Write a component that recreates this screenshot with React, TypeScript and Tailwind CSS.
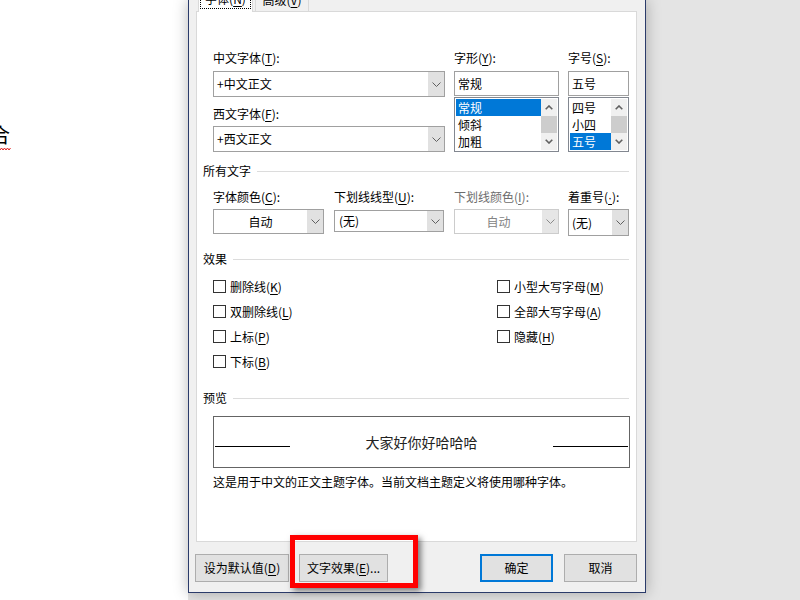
import React from "react";

const Chev = ({ color = "#606060" }: { color?: string }) => (
  <svg width="9" height="5" viewBox="0 0 9 5">
    <polyline points="0.5,0.5 4.5,4.5 8.5,0.5" fill="none" stroke={color} strokeWidth="1" />
  </svg>
);

const ScrollUp = () => (
  <svg width="8" height="5" viewBox="0 0 8 5">
    <polyline points="0.7,4.3 4,1 7.3,4.3" fill="none" stroke="#606060" strokeWidth="1.6" />
  </svg>
);
const ScrollDown = () => (
  <svg width="8" height="5" viewBox="0 0 8 5">
    <polyline points="0.7,0.7 4,4 7.3,0.7" fill="none" stroke="#606060" strokeWidth="1.6" />
  </svg>
);

const U = ({ children }: { children: React.ReactNode }) => <span className="underline underline-offset-2">{children}</span>;

const Scrollbar = () => (
  <div className="w-[16px] flex flex-col bg-[#f0f0f0]">
    <div className="h-[17px] flex items-center justify-center"><ScrollUp /></div>
    <div className="h-[17px] bg-[#cdcdcd]"></div>
    <div className="h-[17px] flex items-center justify-center"><ScrollDown /></div>
  </div>
);

const Check = ({ children }: { children: React.ReactNode }) => (
  <div className="h-[25px] flex items-center">
    <div className="w-[13px] h-[13px] border border-[#333333] bg-white"></div>
    <div className="ml-[4px] leading-[16px]">{children}</div>
  </div>
);

const Section = ({ title, className }: { title: string; className: string }) => (
  <div className={"flex items-center h-[16px] mr-[7px] " + className}>
    <span className="leading-[16px]">{title}</span>
    <div className="flex-1 h-px bg-[#dcdcdc] ml-[6px]"></div>
  </div>
);

export default function App() {
  return (
    <div className="w-[800px] h-[600px] flex overflow-hidden bg-[#e4e4e4] text-[12px] text-black font-['Microsoft_YaHei','Noto_Sans_CJK_SC','Noto_Sans',sans-serif]">
      {/* document page */}
      <div className="w-[188px] h-full bg-white shrink-0">
        <div className="mt-[122px] -ml-[10px] flex flex-col items-start">
          <span className="text-[20px] leading-[26px] font-['Noto_Sans_CJK_SC',serif]">合</span>
          <svg width="22" height="4" viewBox="0 0 22 4" className="-mt-[1px]">
            <polyline points="10,3 11.5,1 13,3 14.5,1 16,3 17.5,1 19,3 20.5,1" fill="none" stroke="#e02020" strokeWidth="1" />
          </svg>
        </div>
      </div>

      {/* dialog */}
      <div className="relative z-10 w-[458px] h-[593px] shrink-0 bg-[#f0f0f0] border-x border-b border-[#2b3b6a] shadow-[0_0_14px_rgba(0,0,0,0.28)] flex flex-col">
        {/* tabs */}
        <div className="relative z-10 h-[12px] overflow-hidden flex items-end pl-[9px]">
          <div className="w-[55px] h-[24px] bg-white border-x border-[#d9d9d9] flex flex-col items-stretch">
            <div className="mx-[1px] h-[21px] border border-dotted border-black flex items-center justify-center leading-[16px]">
              字体(<U>N</U>)
            </div>
          </div>
          <div className="ml-[2px] w-[54px] h-[23px] mb-[1px] bg-[#f0f0f0] border-x border-t border-[#d9d9d9] flex items-center justify-center leading-[16px]">
            高级(<U>V</U>)
          </div>
        </div>

        {/* panel */}
        <div className="-mt-px ml-[7px] mr-[8px] h-[531px] border border-[#d9d9d9] bg-white pl-[6px] pt-[38px] flex flex-col">
          {/* fonts row */}
          <div className="pl-[10px] flex items-start">
            <div className="w-[232px] flex flex-col">
              <div className="h-[16px] leading-[16px]">中文字体(<U>T</U>):</div>
              <div className="mt-[5px] h-[26px] flex border border-[#a0a0a0] bg-white">
                <div className="flex-1 pl-[3px] leading-[24px]">+中文正文</div>
                <div className="w-[16px] bg-[#e1e1e1] flex items-center justify-center"><Chev /></div>
              </div>
              <div className="mt-[9px] h-[16px] leading-[16px]">西文字体(<U>F</U>):</div>
              <div className="mt-[4px] h-[26px] flex border border-[#a0a0a0] bg-white">
                <div className="flex-1 pl-[3px] leading-[24px]">+西文正文</div>
                <div className="w-[16px] bg-[#e1e1e1] flex items-center justify-center"><Chev /></div>
              </div>
            </div>

            <div className="ml-[9px] w-[105px] flex flex-col">
              <div className="h-[16px] leading-[16px]">字形(<U>Y</U>):</div>
              <div className="mt-[5px] h-[25px] border border-[#a0a0a0] bg-white pl-[3px] leading-[23px]">常规</div>
              <div className="mt-[1px] h-[55px] border border-[#828790] bg-white p-px flex">
                <div className="flex-1 flex flex-col">
                  <div className="h-[17px] leading-[17px] pl-[2px] bg-[#0078d7] text-white">常规</div>
                  <div className="h-[17px] leading-[17px] pl-[2px]">倾斜</div>
                  <div className="h-[17px] leading-[17px] pl-[2px]">加粗</div>
                </div>
                <Scrollbar />
              </div>
            </div>

            <div className="ml-[9px] w-[61px] flex flex-col">
              <div className="h-[16px] leading-[16px]">字号(<U>S</U>):</div>
              <div className="mt-[5px] h-[25px] border border-[#a0a0a0] bg-white pl-[3px] leading-[23px]">五号</div>
              <div className="mt-[1px] h-[55px] border border-[#828790] bg-white p-px flex">
                <div className="flex-1 flex flex-col">
                  <div className="h-[17px] leading-[17px] pl-[2px]">四号</div>
                  <div className="h-[17px] leading-[17px] pl-[2px]">小四</div>
                  <div className="h-[17px] leading-[17px] pl-[2px] bg-[#0078d7] text-white">五号</div>
                </div>
                <Scrollbar />
              </div>
            </div>
          </div>

          <Section title="所有文字" className="mt-[11px]" />

          {/* all text row */}
          <div className="mt-[10px] pl-[10px] flex items-start">
            <div className="w-[111px] flex flex-col">
              <div className="h-[16px] leading-[16px]">字体颜色(<U>C</U>):</div>
              <div className="mt-[4px] h-[25px] flex border border-[#a0a0a0] bg-white">
                <div className="flex-1 text-center leading-[23px]">自动</div>
                <div className="w-[16px] bg-[#e1e1e1] flex items-center justify-center"><Chev /></div>
              </div>
            </div>
            <div className="ml-[10px] w-[110px] flex flex-col">
              <div className="h-[16px] leading-[16px]">下划线线型(<U>U</U>):</div>
              <div className="mt-[5px] h-[22px] flex border border-[#a0a0a0] bg-white">
                <div className="flex-1 pl-[4px] leading-[20px]">(无)</div>
                <div className="w-[16px] bg-[#e1e1e1] flex items-center justify-center"><Chev /></div>
              </div>
            </div>
            <div className="ml-[10px] w-[105px] flex flex-col">
              <div className="h-[16px] leading-[16px] text-[#6d6d6d]">下划线颜色(<U>I</U>):</div>
              <div className="mt-[4px] h-[25px] flex border border-[#cccccc] bg-white">
                <div className="flex-1 text-center leading-[23px] text-[#838383]">自动</div>
                <div className="w-[16px] bg-[#e6e6e6] flex items-center justify-center"><Chev color="#8a8a8a" /></div>
              </div>
            </div>
            <div className="ml-[9px] w-[61px] flex flex-col">
              <div className="h-[16px] leading-[16px]">着重号(<span className="underline underline-offset-2 font-['Liberation_Sans',sans-serif]">·</span>):</div>
              <div className="mt-[4px] h-[27px] flex border border-[#a0a0a0] bg-white">
                <div className="flex-1 pl-[3px] leading-[25px]">(无)</div>
                <div className="w-[16px] bg-[#e1e1e1] flex items-center justify-center"><Chev /></div>
              </div>
            </div>
          </div>

          <Section title="效果" className="mt-[15px]" />

          {/* effects */}
          <div className="mt-[7px] pl-[10px] grid grid-cols-[284px_1fr]">
            <div className="flex flex-col">
              <Check>删除线(<U>K</U>)</Check>
              <Check>双删除线(<U>L</U>)</Check>
              <Check>上标(<U>P</U>)</Check>
              <Check>下标(<U>B</U>)</Check>
            </div>
            <div className="flex flex-col">
              <Check>小型大写字母(<U>M</U>)</Check>
              <Check>全部大写字母(<U>A</U>)</Check>
              <Check>隐藏(<U>H</U>)</Check>
            </div>
          </div>

          <Section title="预览" className="mt-[16px] mr-[6px]" />

          {/* preview */}
          <div className="mt-[10px] ml-[10px] mr-[6px] h-[52px] border border-[#646464] bg-white flex items-center px-px">
            <div className="w-[75px] h-px bg-black mt-[8px]"></div>
            <div className="flex-1 text-center text-[14px] leading-[20px] text-[#222222]">大家好你好哈哈哈</div>
            <div className="w-[75px] h-px bg-black mt-[8px]"></div>
          </div>

          <div className="mt-[6px] pl-[10px] h-[16px] leading-[16px]">这是用于中文的正文主题字体。当前文档主题定义将使用哪种字体。</div>
        </div>

        {/* buttons */}
        <div className="mt-[12px] ml-[6px] mr-[8px] flex">
          <div className="w-[94px] h-[28px] border border-[#adadad] bg-[#e1e1e1] flex items-center justify-center">设为默认值(<U>D</U>)</div>
          <div className="ml-[10px] w-[89px] h-[28px] border border-[#adadad] bg-[#e1e1e1] flex items-center justify-center">文字效果(<U>E</U>)...</div>
          <div className="ml-auto w-[73px] h-[28px] border-2 border-[#0078d7] bg-[#e1e1e1] flex items-center justify-center">确定</div>
          <div className="ml-[11px] w-[73px] h-[28px] border border-[#adadad] bg-[#e1e1e1] flex items-center justify-center">取消</div>
        </div>

        {/* red highlight */}
        <div className="absolute left-[101px] top-[535px] w-[128px] h-[53px] border-[5px] border-[#ff0000] shadow-[3px_3px_6px_rgba(0,0,0,0.5)]"></div>
      </div>

      <div className="flex-1 h-full bg-[#e4e4e4]"></div>
    </div>
  );
}
